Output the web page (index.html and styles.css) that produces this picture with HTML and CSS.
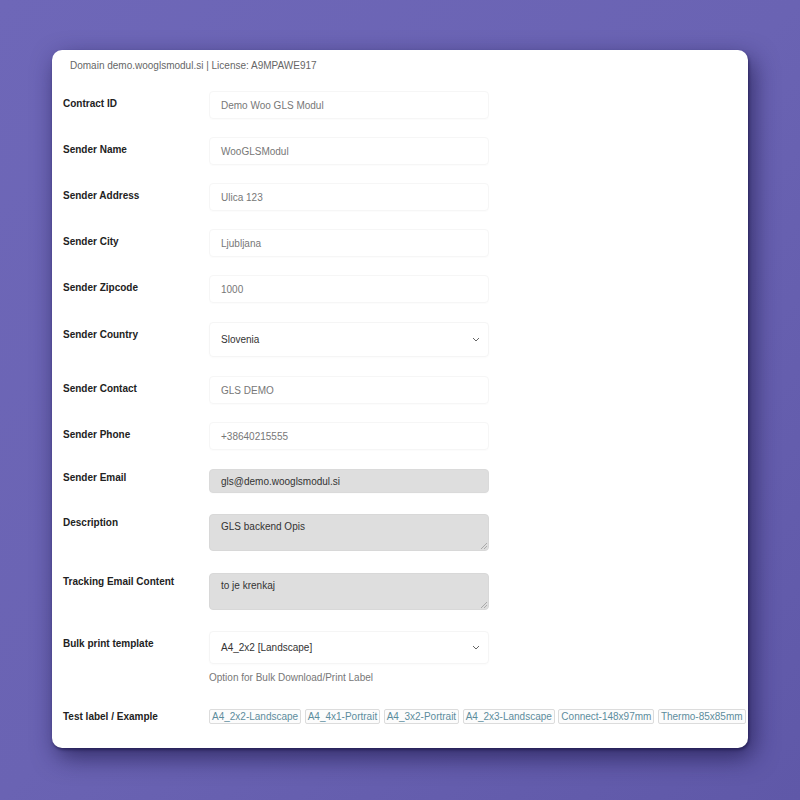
FILE: index.html
```html
<!DOCTYPE html>
<html>
<head>
<meta charset="utf-8">
<link rel="stylesheet" href="styles.css">
</head>
<body>
<div class="card">
  <div class="meta">Domain demo.wooglsmodul.si | License: A9MPAWE917</div>
  <div class="form">
    <div class="row">
      <div class="lbl">Contract ID</div>
      <div class="field"><div class="input">Demo Woo GLS Modul</div></div>
    </div>
    <div class="row">
      <div class="lbl">Sender Name</div>
      <div class="field"><div class="input">WooGLSModul</div></div>
    </div>
    <div class="row">
      <div class="lbl">Sender Address</div>
      <div class="field"><div class="input">Ulica 123</div></div>
    </div>
    <div class="row">
      <div class="lbl">Sender City</div>
      <div class="field"><div class="input">Ljubljana</div></div>
    </div>
    <div class="row">
      <div class="lbl">Sender Zipcode</div>
      <div class="field"><div class="input">1000</div></div>
    </div>
    <div class="row row-sel">
      <div class="lbl">Sender Country</div>
      <div class="field">
        <div class="select select-country"><span>Slovenia</span>
          <svg class="chev" width="8" height="5" viewBox="0 0 8 5"><path d="M1 1 L4 4 L7 1" fill="none" stroke="#666" stroke-width="1"/></svg>
        </div>
      </div>
    </div>
    <div class="row">
      <div class="lbl">Sender Contact</div>
      <div class="field"><div class="input">GLS DEMO</div></div>
    </div>
    <div class="row">
      <div class="lbl">Sender Phone</div>
      <div class="field"><div class="input">+38640215555</div></div>
    </div>
    <div class="row row-sel">
      <div class="lbl lbl-tight">Sender Email</div>
      <div class="field"><div class="input input-ro">gls@demo.wooglsmodul.si</div></div>
    </div>
    <div class="row row-area">
      <div class="lbl lbl-tight">Description</div>
      <div class="field"><div class="textarea">GLS backend Opis</div></div>
    </div>
    <div class="row row-area">
      <div class="lbl lbl-tight">Tracking Email Content</div>
      <div class="field"><div class="textarea">to je krenkaj</div></div>
    </div>
    <div class="row row-sel">
      <div class="lbl">Bulk print template</div>
      <div class="field">
        <div class="select select-bulk"><span>A4_2x2 [Landscape]</span>
          <svg class="chev" width="8" height="5" viewBox="0 0 8 5"><path d="M1 1 L4 4 L7 1" fill="none" stroke="#666" stroke-width="1"/></svg>
        </div>
        <div class="help">Option for Bulk Download/Print Label</div>
      </div>
    </div>
    <div class="row row-tags">
      <div class="lbl lbl-mid">Test label / Example</div>
      <div class="tags">
        <span class="tag">A4_2x2-Landscape</span>
        <span class="tag">A4_4x1-Portrait</span>
        <span class="tag">A4_3x2-Portrait</span>
        <span class="tag">A4_2x3-Landscape</span>
        <span class="tag">Connect-148x97mm</span>
        <span class="tag">Thermo-85x85mm</span>
      </div>
    </div>
  </div>
</div>
</body>
</html>
```

FILE: styles.css
```css
* { box-sizing: border-box; }

html, body {
  margin: 0;
  padding: 0;
}

body {
  width: 800px;
  height: 800px;
  overflow: hidden;
  background: linear-gradient(135deg, #6e67b8 0%, #6a63b3 50%, #5f58a8 100%);
  font-family: "Liberation Sans", Arial, sans-serif;
  font-size: 10px;
  padding: 50px 52px;
}

.card {
  width: 696px;
  height: 698px;
  background: #ffffff;
  border-radius: 10px;
  box-shadow: 5px 9px 24px rgba(25, 20, 70, 0.7), 1px 2px 3px rgba(25, 20, 70, 0.6);
}

.meta {
  padding: 10px 0 0 18px;
  line-height: 12px;
  color: #666;
  margin-bottom: 10px;
}

.row {
  display: flex;
  padding: 9px 0 9px 11px;
}

.row-sel { padding-top: 10px; padding-bottom: 10px; }
.row-area { padding-top: 11px; padding-bottom: 11px; }
.row-tags { padding-top: 15px; align-items: center; }

.lbl {
  width: 146px;
  flex: none;
  font-weight: bold;
  color: #222;
  line-height: 12px;
  padding-top: 7px;
}

.lbl-tight { padding-top: 3px; }
.lbl-mid { padding-top: 0; }

.field {
  width: 280px;
  flex: none;
}

.input {
  height: 28px;
  border: 1px solid #f6f6f6;
  border-radius: 4px;
  padding: 0 11px;
  display: flex;
  align-items: center;
  color: #777;
  box-shadow: 0 1px 1px rgba(0, 0, 0, 0.015);
}

.input-ro {
  height: 24px;
  background: #dedede;
  border-color: #dadada;
  color: #333;
}

.select {
  height: 35px;
  border: 1px solid #f5f5f5;
  border-radius: 4px;
  padding: 0 8px 0 11px;
  display: flex;
  align-items: center;
  justify-content: space-between;
  color: #333;
  box-shadow: 0 1px 2px rgba(0, 0, 0, 0.02);
}

.select-bulk { height: 33px; }

.chev { display: block; }

.textarea {
  position: relative;
  height: 37px;
  background: #dedede;
  border: 1px solid #d8d8d8;
  border-radius: 4px;
  padding: 6px 11px;
  color: #333;
  line-height: 12px;
}

.textarea::after {
  content: "";
  position: absolute;
  right: 1px;
  bottom: 1px;
  width: 6px;
  height: 6px;
  background: linear-gradient(135deg, transparent 0 45%, #aaa 45% 55%, transparent 55% 70%, #aaa 70% 80%, transparent 80%);
}

.help {
  margin-top: 8px;
  line-height: 12px;
  color: #777;
}

.tags {
  display: flex;
  gap: 3.5px;
  white-space: nowrap;
}

.tag {
  border: 1px solid #dcdcdc;
  border-radius: 2px;
  padding: 0 2px;
  line-height: 13px;
  color: #5c8c9c;
  background: #fcfcfc;
}
```
